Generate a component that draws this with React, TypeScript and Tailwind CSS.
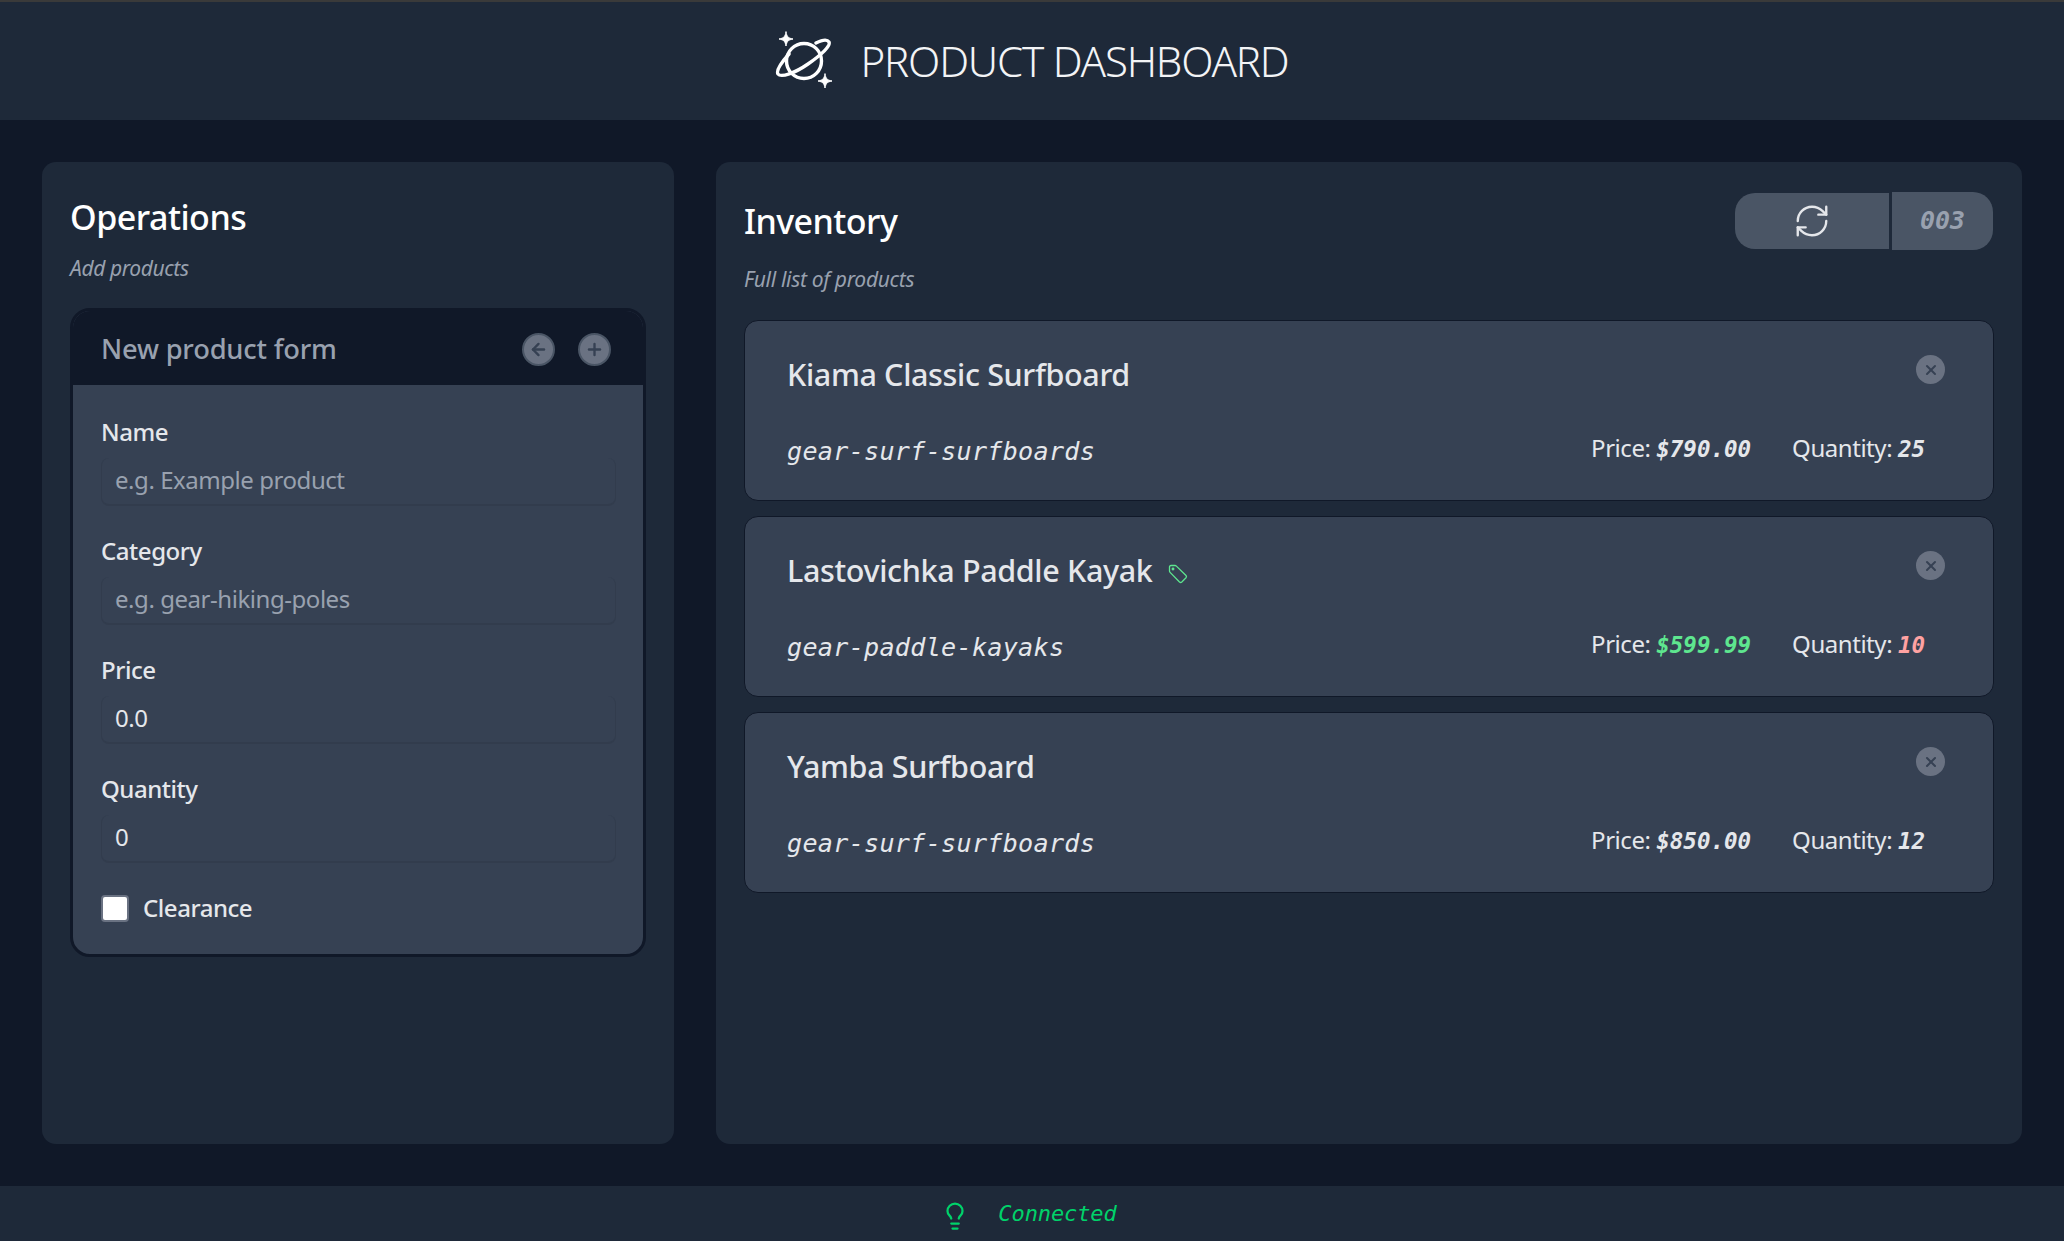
import React from "react";
import { ArrowLeft, Plus, RefreshCw, X, Lightbulb } from "lucide-react";

const sans = "font-['Noto_Sans','Open_Sans',sans-serif]";
const mono = "font-['DejaVu_Sans_Mono','Liberation_Mono',monospace]";

function Planet() {
  return (
    <svg width="60" height="60" viewBox="0 0 60 60" fill="none" stroke="white" strokeWidth="3.4" strokeLinecap="round" strokeLinejoin="round">
      <circle cx="29" cy="31" r="17.5" />
      <path d="M14 24 C6 33 1 41 3 44 C6 48 20 43 33 34 C46 25 56 16 54 12 C52 9 47 10 41 13" />
      <path d="M11 2 C12 7 13 8 18 9 C13 10 12 11 11 16 C10 11 9 10 4 9 C9 8 10 7 11 2 Z" fill="white" strokeWidth="1" />
      <path d="M50 44 C51 49 52 50 57 51 C52 52 51 53 50 58 C49 53 48 52 43 51 C48 50 49 49 50 44 Z" fill="white" strokeWidth="1" />
    </svg>
  );
}

function SlimTag() {
  return (
    <svg width="20" height="20" viewBox="0 0 20 20" fill="none" stroke="#5ee68f" strokeWidth="1.3" strokeLinejoin="round" className="mt-[6px]">
      <path d="M1.5 3 Q1.5 1.5 3 1.5 L7 1.5 Q7.8 1.5 8.4 2.1 L18 11.5 Q19 12.7 18 13.8 L13.8 18 Q12.7 19 11.5 18 L2.1 8.4 Q1.5 7.8 1.5 7 Z" />
      <circle cx="5" cy="5" r="0.8" />
    </svg>
  );
}

function Field({ label, placeholder, value }: { label: string; placeholder?: string; value?: string }) {
  return (
    <div className="flex flex-col">
      <label className="text-[24px] leading-[32px] font-medium text-gray-200 tracking-[-0.45px]">{label}</label>
      <input
        readOnly
        placeholder={placeholder}
        value={value ?? ""}
        className="mt-[10px] mb-[29px] h-[48px] w-full rounded-lg bg-gray-700 px-[13px] pb-[3px] text-[24px] text-gray-200 tracking-[-0.45px] placeholder:text-gray-400 outline-none border-x border-b-2 border-[#323c4d]"
      />
    </div>
  );
}

function CircleBtn({ children }: { children: React.ReactNode }) {
  return (
    <span className="flex h-[33px] w-[33px] items-center justify-center rounded-full border-2 border-gray-600 bg-gray-500 text-gray-700">
      {children}
    </span>
  );
}

function Product({ name, cat, price, qty, priceCls = "text-gray-200", qtyCls = "text-gray-200", tag = false }: { name: string; cat: string; price: string; qty: string; priceCls?: string; qtyCls?: string; tag?: boolean }) {
  return (
    <div className="relative h-[181px] rounded-[14px] border border-gray-900 bg-gray-700 px-[42px] pt-[30px]">
      <div className="flex items-center gap-[15px] h-[48px]">
        <span className="text-[30.5px] font-medium text-gray-200 tracking-[-0.35px]">{name}</span>
        {tag && <SlimTag />}
      </div>
      <span className="absolute right-[48px] top-[34px] flex h-[29px] w-[29px] items-center justify-center rounded-full bg-gray-500 text-gray-700">
        <X size={16} strokeWidth={3} />
      </span>
      <div className="mt-[31px] flex items-center justify-between pr-[26px]">
        <span className={`${mono} italic relative top-[3px] text-[25.1px] text-gray-200 tracking-[0.3px]`}>{cat}</span>
        <div className="flex items-center gap-[41px] text-[24px] text-gray-200 tracking-[-0.45px]">
          <span>Price: <b className={`${mono} italic text-[22.5px] tracking-normal ${priceCls}`}>{price}</b></span>
          <span>Quantity: <b className={`${mono} italic text-[22.5px] tracking-normal ${qtyCls}`}>{qty}</b></span>
        </div>
      </div>
    </div>
  );
}

export default function App() {
  return (
    <div className={`${sans} flex h-[1241px] flex-col bg-gray-900 text-white`}>
      <header className="flex h-[120px] items-center justify-center gap-[26px] border-t-2 border-[#3a3a3a] bg-gray-800 pb-[2px] pr-[1px]">
        <Planet />
        <h1 className="text-[42px] font-light text-gray-100 tracking-[-1.2px]">PRODUCT DASHBOARD</h1>
      </header>

      <main className="flex min-h-0 flex-1 gap-[42px] p-[42px]">
        <section className="flex w-[632px] flex-col rounded-[14px] bg-gray-800 px-[28px] pt-[31px]">
          <h2 className="text-[34px] leading-[48px] font-medium text-white tracking-[-0.5px]">Operations</h2>
          <p className="mt-[13px] text-[21px] leading-[28px] italic text-gray-400 tracking-[-0.4px]">Add products</p>
          <div className="mt-[26px] overflow-hidden rounded-[20px] border-[3px] border-gray-900 bg-gray-700">
            <div className="flex h-[74px] items-center justify-between bg-gray-900 pl-[28px] pr-[32px] pt-[3px]">
              <span className="text-[27.3px] font-medium text-gray-400 tracking-[-0.2px]">New product form</span>
              <div className="flex gap-[23px]">
                <CircleBtn><ArrowLeft size={19} strokeWidth={3} /></CircleBtn>
                <CircleBtn><Plus size={19} strokeWidth={3} /></CircleBtn>
              </div>
            </div>
            <div className="pl-[28px] pr-[27px] pt-[31px] pb-[28px]">
              <Field label="Name" placeholder="e.g. Example product" />
              <Field label="Category" placeholder="e.g. gear-hiking-poles" />
              <Field label="Price" value="0.0" />
              <Field label="Quantity" value="0" />
              <label className="-mt-[2px] flex items-center gap-[14px] text-[24px] font-medium text-gray-200 tracking-[-0.45px]">
                <span className="h-[27px] w-[28px] rounded-[4px] border-2 border-gray-500 bg-white" />
                Clearance
              </label>
            </div>
          </div>
        </section>

        <section className="flex flex-1 flex-col rounded-[14px] bg-gray-800 px-[28px] pt-[28px]">
          <div className="flex items-start justify-between">
            <h2 className="mt-[7px] text-[34px] leading-[48px] font-medium text-white tracking-[-0.55px]">Inventory</h2>
            <div className="mt-[2px] mr-[1px] flex items-center gap-[3px]">
              <button className="flex h-[56px] w-[154px] items-center justify-center rounded-l-[20px] bg-gray-600 text-gray-200">
                <RefreshCw size={38} strokeWidth={1.5} />
              </button>
              <span className={`${mono} flex h-[58px] w-[101px] items-center justify-center rounded-r-[20px] bg-gray-600 text-[25px] font-semibold italic text-gray-400`}>003</span>
            </div>
          </div>
          <p className="mt-[15px] text-[21px] leading-[28px] italic text-gray-400 tracking-[-0.3px]">Full list of products</p>
          <div className="mt-[27px] flex flex-col gap-[15px]">
            <Product name="Kiama Classic Surfboard" cat="gear-surf-surfboards" price="$790.00" qty="25" />
            <Product name="Lastovichka Paddle Kayak" cat="gear-paddle-kayaks" price="$599.99" qty="10" priceCls="text-[#5ee68f]" qtyCls="text-red-300" tag />
            <Product name="Yamba Surfboard" cat="gear-surf-surfboards" price="$850.00" qty="12" />
          </div>
        </section>
      </main>

      <footer className="flex h-[55px] items-center justify-center gap-[28px] bg-gray-800 pr-[7px]">
        <Lightbulb size={30} strokeWidth={1.8} className="mt-[4px] text-[#00d26a]" />
        <span className={`${mono} text-[22px] italic text-[#00d26a] tracking-[-0.1px]`}>Connected</span>
      </footer>
    </div>
  );
}
